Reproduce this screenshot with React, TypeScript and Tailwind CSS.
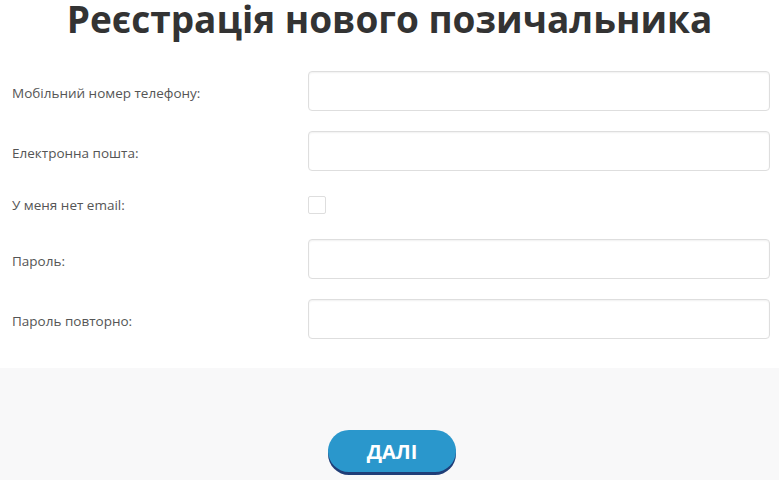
const font = { fontFamily: '"Open Sans", "Noto Sans", sans-serif' };

interface FieldRowProps {
  label: string;
  type?: string;
}

function FieldRow({ label, type = "text" }: FieldRowProps) {
  return (
    <div className="flex h-[60px] items-center">
      <label className="w-[308px] shrink-0 pl-[12px] pt-[4px] text-[13.5px] text-[#555]">{label}</label>
      <input
        type={type}
        className="h-[40px] w-[462px] rounded-[4px] border border-[#dedede] bg-white px-3 text-[14px] shadow-[inset_0_1px_2px_rgba(0,0,0,0.06)] outline-none"
      />
    </div>
  );
}

export default function App() {
  return (
    <div className="min-h-[480px] bg-white" style={font}>
      <div className="bg-white pb-[19px]">
        <h1 className="pb-[23px] text-center text-[37px] font-bold leading-[38px] text-[#333]">
          Реєстрація нового позичальника
        </h1>
        <FieldRow label="Мобільний номер телефону:" type="tel" />
        <FieldRow label="Електронна пошта:" type="email" />
        <div className="flex h-[48px] items-center">
          <label className="w-[308px] shrink-0 pl-[12px] text-[13.5px] text-[#555]">У меня нет email:</label>
          <input
            type="checkbox"
            className="h-[18px] w-[18px] appearance-none rounded-[2px] border border-[#dedede] bg-white"
          />
        </div>
        <FieldRow label="Пароль:" type="password" />
        <FieldRow label="Пароль повторно:" type="password" />
      </div>
      <div className="flex h-[112px] justify-center bg-[#f8f8f9] pt-[62px]">
        <button
          type="button"
          className="ml-[5px] h-[42px] w-[128px] rounded-full bg-[#2a97cc] pt-[2px] text-[20px] font-bold leading-none text-white shadow-[0_3px_0_#1f3d77]"
        >
          ДАЛІ
        </button>
      </div>
    </div>
  );
}
